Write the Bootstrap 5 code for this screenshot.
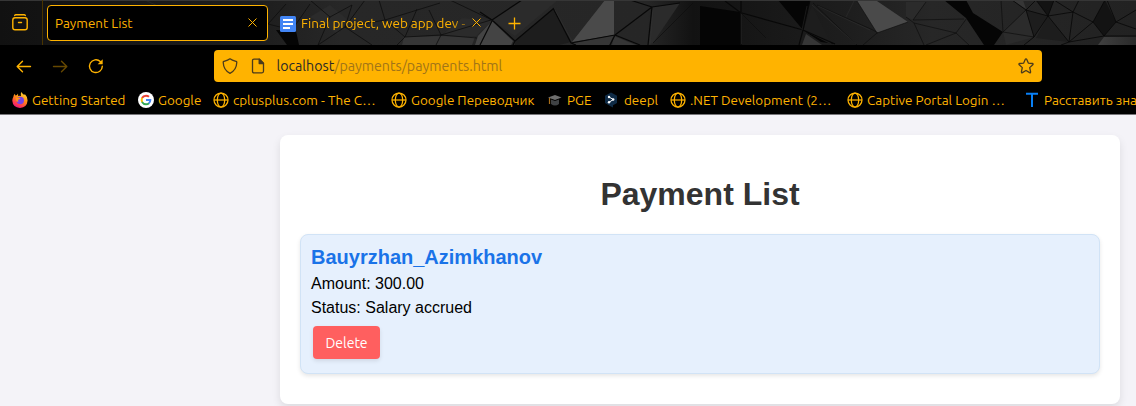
<!DOCTYPE html>
<html lang="en">
<head>
<meta charset="utf-8">
<title>Payment List</title>
<link href="https://cdn.jsdelivr.net/npm/bootstrap@5.3.0/dist/css/bootstrap.min.css" rel="stylesheet">
<script src="https://cdn.jsdelivr.net/npm/bootstrap@5.3.0/dist/js/bootstrap.bundle.min.js"></script>
<style>
:root{--amber:#ffb300;--ui:Ubuntu,"Noto Sans",sans-serif}
body{background:#f4f3f8;font-family:"Liberation Sans",Arial,sans-serif;color:#000;overflow:hidden;height:406px}
.chrome-ui{font-family:var(--ui);font-size:13.45px;color:var(--amber);background:#000;height:115px;border-bottom:1px solid #77767a}
.chrome-ui svg{display:block;flex:none}
.tabs-strip{height:45px;background:#151515;position:relative}
.facets{position:absolute;inset:0;z-index:0}
.tabs-strip>div{z-index:1;position:relative}
.lib-button{width:43px;height:45px;border-right:1px solid #493400;padding-left:12px}
.tab-on{width:221px;height:36px;margin:0 0 0 4px;border:1px solid var(--amber);border-radius:4px;background:#000;padding:0 10px 0 7px}
.tab-off{width:215px;padding:0 9px 0 12px}
.tab-title{white-space:nowrap;padding-top:2px}
.fade-title{width:171px;margin-left:5px;flex:none;-webkit-mask-image:linear-gradient(90deg,#000 150px,rgba(0,0,0,.35) 166px);mask-image:linear-gradient(90deg,#000 150px,rgba(0,0,0,.35) 166px)}
.tool-row{height:41px;padding:5px 0 4px 16px}
.nav-set{width:198px;gap:20px}
.url-bar{width:828px;height:32px;border-radius:4px;background:var(--amber);color:#2b2927;padding:0 8px;font-size:14.2px}
.url-text{margin-left:10.5px;white-space:nowrap;padding-top:2px}
.url-path{color:#a17418}
.mark-row{display:grid;grid-template-columns:126px 75px 178px 156px 57px 66px 177px 177px 112px;padding-left:12px;height:28px}
.mark-row>div{display:flex;align-items:center;gap:4px;white-space:nowrap}
.mark-row span{line-height:20px}
.sheet{width:840px;height:269px;margin:20px 0 0 280px;padding:39px 20px 0;background:#fff;border-radius:8px;box-shadow:0 4px 8px rgba(0,0,0,.1)}
.sheet h1{font-size:32px;font-weight:700;line-height:40px;color:#333;margin:0 0 20px}
.pay-item{height:140px;background:#e6f0fd;border:1px solid #d1e3f6;border-radius:8px;padding:10px;box-shadow:0 2px 4px rgba(0,0,0,.1);line-height:24px;font-size:16px}
.pay-name{font-size:20px;font-weight:700;color:#1a73e8;line-height:24px;margin-bottom:3px}
.del-btn{font-family:var(--ui);font-size:14px;line-height:17px;color:#fff;background:#ff5f5f;border:0;border-radius:4px;width:67px;height:33px;margin:6px 0 0 2px;padding:2px 0 0;box-shadow:0 2px 4px rgba(0,0,0,.1)}
.del-btn:hover{background:#ff5f5f;color:#fff}
</style>
</head>
<body>
<svg width="0" height="0" class="d-none"><defs>
<symbol id="globe" viewBox="0 0 16 16"><g fill="none" stroke="#ffb300" stroke-width="1.25"><circle cx="8" cy="8" r="7"/><ellipse cx="8" cy="8" rx="3.7" ry="7"/><path d="M1 8h14"/></g></symbol>
</defs></svg>
<header class="chrome-ui">
  <div class="tabs-strip d-flex align-items-center">
    <svg class="facets" width="1136" height="45" viewBox="0 0 1136 45">
      <defs>
        <linearGradient id="bg"><stop offset="0" stop-color="#111"/><stop offset=".23" stop-color="#1e1e1e"/><stop offset=".3" stop-color="#272727"/><stop offset=".57" stop-color="#262626"/><stop offset=".61" stop-color="#121212"/><stop offset=".68" stop-color="#181818"/><stop offset=".75" stop-color="#1e1e1e"/><stop offset=".82" stop-color="#272727"/><stop offset="1" stop-color="#222"/></linearGradient>
        <linearGradient id="lit"><stop stop-color="#404040"/><stop offset="1" stop-color="#2a2a2a"/></linearGradient>
      </defs>
      <path fill="url(#bg)" d="M0 0h1136v45H0z"/>
      <path fill="#050505" d="M276 30l20 1 3 14h-12zM700 6l40 6v33h-40zM778 0h32l-7 30zM803 30l32 14-14-2zM944 0h22l7 13 30 19-9 13h-10l-18-27z"/>
      <path fill="#2b2b2b" d="M310 17l20-12 18 15-10 14zM405 37l35 0 22-19 30 3-16 15zM492 20l30-20h36L515 36zM652 7l28-4-27 40-5 2zM906 2h20l-13 18-7-3zM1003 32l23-22 8 27-28 8z"/>
      <path fill="#1d1d1d" d="M515 41l38-32 18 33-12 3h-44zM812 5l20 40-29-15zM1026 10l22 6-14 21zM1048 16l21 26-33-4z"/>
      <path fill="#131313" d="M1036 0h18l-6 16zM1093 22l12-22 11 22-12 14z"/>
      <path fill="#4a4a4a" d="M605 0h9v35l-42 7zM857 1h20l31 21-31 11z"/>
      <path fill="#444" d="M492 21l21 20-2 4h-36l3-9z"/>
      <path fill="#363636" d="M404 37l37-1 34 1-3 8h-70zM572 43l42-8-5 10h-33zM614 36l22 9h-24zM806 34l16 11h-20zM1012 0h11l3 9z"/>
      <path fill="url(#lit)" d="M1104 37h32v8h-38z"/>
      <g fill="none" stroke="#0c0c0c" stroke-width="1" stroke-linejoin="round">
        <path opacity=".75" d="M268 24l18-20M268 24l24 6M292 30l18-26M310 0l20 17-12 28M330 17l22-12-7 22M345 27l-27 18M345 27l20-27M345 27l27 18M379 0l6 20-40 7M385 20l20 17M385 20l55-17M405 37l12-28M405 37l-8 8M405 37l36-2 36 3M441 35l-12-25M441 35l50-15M441 35l-5 10M450 0l42 20"/>
        <path stroke="#080808" stroke-width="1.200" d="M480 12l12 8 30-20M492 20l23 21M480 45l12-24M515 41l38-32M513 45l2-4M553 8l18 35M571 43l44-8 37-28M630 0l22 7 28-4M652 7l-4 38M615 35l-5 10M571 43l5 2M615 35l25 10M725 1l16 12M741 0v13M741 13v32M742 13l61 17M803 30l7-30M803 30l-4 15M803 30l32 14"/>
        <path opacity=".6" d="M653 43l40-40M813 3l44 42M817 5l56 25M873 30l5 3M742 14l24 24M857 1l20 32M877 33l31-11M877 33l-14 12"/>
        <path opacity=".65" d="M906 17l8 6 42 10M913 20l51-1M956 33l11-15M956 33l13 12M956 33l-30 12M913 20l13-18M914 23l10 22M1001 0l2 32 23-22M1003 32l31 5"/>
        <path opacity=".85" stroke="#080808" d="M1026 10l-14-10M1026 10l22 6 25-4M1026 10l8 27-10 8M1048 16l-14 21M1048 16l21 26M1036 0l12 16 6-16M1073 12l-4 30M1073 12l6-12M1036 0l-10 10M1054 0l19 12 20 10M1069 42l-8 3M1069 42l24-20M1093 22l12-22M1093 22l11 14-35 6M1107 0l9 22-12 14M1116 22l20-12M1116 22l20 7M1104 36h32"/>
      </g>
      <g fill="none" stroke="#343434" stroke-width=".8" opacity=".55"><path d="M138 18l100-10 25 18M145 0l25 12M741.500 14v30M807 6l-5 24M812 5l44 39M818 6l52 24M555 10l17 31M653 10l-3 35M846 17l8-16"/></g>
      <path stroke="#363636" d="M0 .5h1136"/>
    </svg>
    <div class="lib-button d-flex align-items-center">
      <svg width="16" height="17" viewBox="0 0 16 17" fill="none" stroke="#ffb300" stroke-width="1.4" stroke-linecap="round"><path d="M2.7 1.500Q3 .8 4 .8h8q1 0 1.300.7"/><path d="M.8 6Q.8 3.800 3 3.800h10q2.200 0 2.200 2.200v7.500q0 2.200-2.200 2.200H3Q.8 15.700.8 13.500zM6.500 8.500h3"/></svg>
    </div>
    <div class="tab-on d-flex align-items-center justify-content-between"><span class="tab-title">Payment List</span>
      <svg width="9" height="9" viewBox="0 0 9 9" stroke="#ffb300" stroke-width="1"><path d="M.5.5l8 8M8.500.5l-8 8"/></svg></div>
    <div class="tab-off d-flex align-items-center">
      <svg class="mt-1" width="16" height="16" viewBox="0 0 16 16"><rect width="16" height="16" rx="1.500" fill="#4285f4"/><path d="M3 4h10M3 8h10M3 12h7" stroke="#fff" stroke-width="1.800"/></svg>
      <span class="tab-title fade-title">Final project, web app dev -</span>
      <svg width="9" height="9" viewBox="0 0 9 9" stroke="#ffb300" stroke-width="1"><path d="M.5.5l8 8M8.500.5l-8 8"/></svg></div>
    <div style="padding:1px 0 0 25px"><svg width="13" height="13" viewBox="0 0 13 13" stroke="#ffb300" stroke-width="1.300"><path d="M6.500.5v12M.5 6.500h12"/></svg></div>
  </div>
  <div class="tool-row d-flex">
    <div class="nav-set d-flex align-items-center">
      <svg width="16" height="16" viewBox="0 0 16 16" fill="none" stroke="#ffb300" stroke-width="1.400" stroke-linecap="round" stroke-linejoin="round"><path d="M14.500 8.500H1.500M6.500 3.200L1.200 8.500l5.300 5.200"/></svg>
      <svg width="16" height="16" viewBox="0 0 16 16" fill="none" stroke="#664800" stroke-width="1.400" stroke-linecap="round" stroke-linejoin="round"><path d="M1.500 8.500h13M9.500 3.200l5.300 5.300-5.300 5.200"/></svg>
      <svg width="16" height="16" viewBox="0 0 16 16" fill="none" stroke="#ffb300" stroke-width="1.400" stroke-linecap="round"><path d="M14.300 8.200A6.400 6.400 0 1 1 12.300 3.500"/><path d="M14.700 1.200v5h-5z" fill="#ffb300" stroke="none"/></svg>
    </div>
    <div class="url-bar d-flex align-items-center">
      <svg width="16" height="16" viewBox="0 0 16 16" fill="none" stroke="#4b3b1c" stroke-width="1.300" stroke-linejoin="round"><path d="M8 .8c2 1.500 4 2 6.200 2.600q.6.200.6.900C14.600 9.500 12 13.400 8 15.300 4 13.400 1.400 9.500 1.200 4.300q0-.7.6-.9C4 2.800 6 2.300 8 .8z"/></svg>
      <svg style="margin-left:12px" width="16" height="16" viewBox="0 0 16 16" fill="none" stroke="#4b3b1c" stroke-width="1.300" stroke-linejoin="round"><path d="M4 1.200h5.500l4 4v8.100q0 1.500-1.500 1.500H4q-1.500 0-1.500-1.500V2.700Q2.500 1.200 4 1.200z"/><path d="M9.200 1.200v4.300h4.300z" fill="#4b3b1c"/></svg>
      <span class="url-text">localhost<span class="url-path">/payments/payments.html</span></span>
      <svg class="ms-auto" width="16" height="16" viewBox="0 0 16 16" fill="none" stroke="#4b3b1c" stroke-width="1.300" stroke-linejoin="round"><path d="M8 .9q.5 0 .8.700l1.500 3.500 4 .4q1.300.3.500 1.200l-3.100 2.900.9 4.300q.1 1.200-1 .7L8 12.500l-3.600 2.100q-1.100.5-1-.7l.9-4.300L1.200 6.700q-.8-.9.5-1.200l4-.4 1.500-3.500Q7.500.9 8 .9z"/></svg>
    </div>
  </div>
  <nav class="mark-row" aria-label="Bookmarks">
    <div><svg width="16" height="16" viewBox="0 0 16 16"><defs><linearGradient id="ff" x1=".8" y1="0" x2=".3" y2="1"><stop stop-color="#ffe23a"/><stop offset=".45" stop-color="#ff8a16"/><stop offset=".8" stop-color="#ff3750"/><stop offset="1" stop-color="#e31587"/></linearGradient></defs><path fill="url(#ff)" d="M1.300 5Q1.500 3.200 2.800 1.800L3.400 3.500 5 3 6 1.500 6.200 4Q8 3.500 9 4 8.200 1.700 9.600 0q.7 1.900 2.700 3L12.800 2Q15.800 5 15.600 8.500 15 15.500 8 16 .8 15.500.3 8.800.3 6.500 1.300 5z"/><circle cx="8.300" cy="8.500" r="3.700" fill="#7542e5"/><path fill="#ff9417" d="M3.500 5.500l3.800.3 1.200 1-2.500 1 .4 1.900Q5 10 4.300 9z"/></svg><span>Getting Started</span></div>
    <div><svg width="16" height="16" viewBox="0 0 16 16" fill="none" stroke-width="2"><circle cx="8" cy="8" r="8" fill="#fff"/><path stroke="#ea4335" d="M4 6Q5.300 3.700 8 3.700q1.700 0 3 1.100"/><path stroke="#fbbc05" d="M4.100 5.800Q3.200 8 4.100 10.200"/><path stroke="#34a853" d="M4 10Q5.500 12.300 8 12.300q1.800 0 3-1.100"/><path stroke="#4285f4" d="M8 8h4.300q0 2.200-1.500 3.300"/></svg><span>Google</span></div>
    <div><svg width="16" height="16"><use href="#globe"/></svg><span>cplusplus.com - The C…</span></div>
    <div><svg width="16" height="16"><use href="#globe"/></svg><span>Google Переводчик</span></div>
    <div><svg width="16" height="16" viewBox="0 0 16 16"><path fill="#6e6e6e" d="M1 5.500L8 3l6.500 2.500L8 8z"/><path fill="#3f4245" d="M4 7.500l4 1.500 4-1.500V12q-4 3-8 0z"/><path d="M2.500 6v6" stroke="#a86d18" stroke-width="1.200"/></svg><span>PGE</span></div>
    <div><svg width="16" height="16" viewBox="0 0 16 16"><path fill="#0f2b46" d="M7 .5l6 3.300v7.200l-4 2.300v2.200l-2.500-1.200L1 11V3.800z"/><path stroke="#fff" fill="none" d="M5 5l4.300 2.500L5 10.300"/><g fill="#fff"><circle cx="5" cy="5" r="1.200"/><circle cx="9.200" cy="7.500" r="1.200"/><circle cx="5" cy="10.200" r="1.200"/></g></svg><span>deepl</span></div>
    <div><svg width="16" height="16"><use href="#globe"/></svg><span>.NET Development (2…</span></div>
    <div><svg width="16" height="16"><use href="#globe"/></svg><span>Captive Portal Login …</span></div>
    <div><svg width="16" height="16" viewBox="0 0 16 16"><path d="M2 1.700h12M8 1.700V15" stroke="#087ff5" stroke-width="2"/></svg><span>Расставить зна</span></div>
  </nav>
</header>
<main class="sheet">
  <h1 class="text-center">Payment List</h1>
  <section class="pay-item">
    <div class="pay-name">Bauyrzhan_Azimkhanov</div>
    <div>Amount: 300.00</div>
    <div>Status: Salary accrued</div>
    <button class="btn del-btn d-block" type="button">Delete</button>
  </section>
</main>
</body>
</html>
